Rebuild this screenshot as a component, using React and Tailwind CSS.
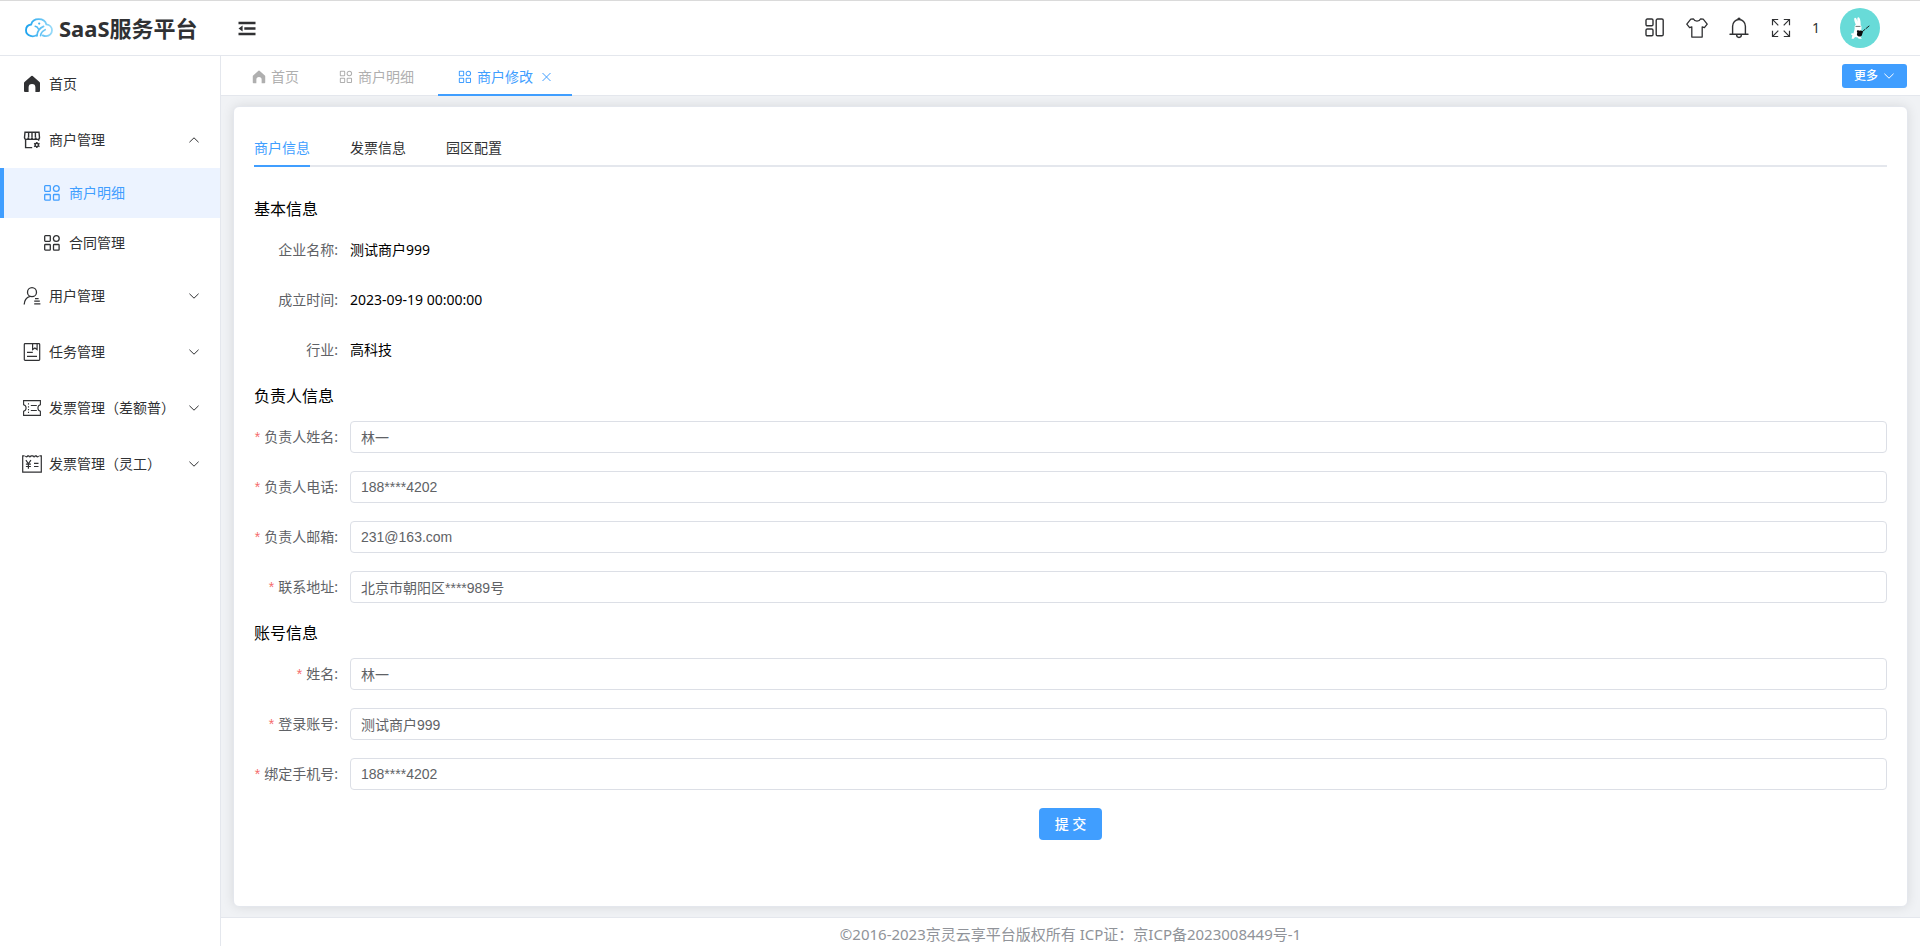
import { useState } from "react";
import clsx from "clsx";

const LogoIcon = () => (
  <svg width="28" height="20" viewBox="0 0 28 20" fill="none" strokeLinecap="round">
    <defs>
      <linearGradient id="cloud" x1="0" y1="0" x2="28" y2="0" gradientUnits="userSpaceOnUse">
        <stop offset="0" stopColor="#16a0ee" />
        <stop offset="1" stopColor="#9bdcf9" />
      </linearGradient>
    </defs>
    <g stroke="url(#cloud)">
      <path
        strokeWidth="1.8"
        d="M11.5 17.3c-1.8 1-4 1.300-6 .6C2.600 17 1 14.700 1 12.200c0-3 2.200-5.300 5.200-5.700C7 3.300 10.200 1.200 13.800 1.200c3.700 0 6.700 2 7.600 5.200 3.300.3 5.600 2.800 5.600 5.900 0 3.300-2.500 5.900-5.900 5.900-1.300 0-2.400-.3-3.400-.8"
      />
      <path strokeWidth="1.700" d="M12 17.900c.1-4.200 2.200-7.700 6.600-9.500M15.600 17.600c.3-2.400 1.900-4.700 4.600-5.900" />
      <path strokeWidth="1.500" d="M10.200 8.300c1.600.3 2.700 1.300 3.200 2.800" />
    </g>
    <circle cx="14.200" cy="5.600" r="1.100" fill="#3fb4f2" />
  </svg>
);

const FoldIcon = () => (
  <svg width="18" height="15" viewBox="0 0 18 15" fill="#303133">
    <path d="M.500 .8h17v2.400H.500zM6.300 6.300h11.200v2.400H6.300zM.500 11.800h17v2.400H.500zM.500 7.500 4.600 4.500v6z" />
  </svg>
);

const HomeIcon = ({ size = 18 }) => (
  <svg width={size} height={size} viewBox="0 0 18 18" fill="currentColor">
    <path d="M9 .8a1 1 0 0 1 .7.3l6.800 6c.3.300.5.600.5 1V16a1 1 0 0 1-1 1h-3.600v-4.600a3.400 3.400 0 0 0-6.800 0V17H2a1 1 0 0 1-1-1V8.100c0-.4.2-.7.5-1l6.800-6A1 1 0 0 1 9 .8z" />
  </svg>
);

const GridIcon = ({ size = 18 }) => (
  <svg width={size} height={size} viewBox="0 0 18 18" fill="none" stroke="currentColor" strokeWidth="1.300">
    <rect x="1.700" y="1.700" width="5.600" height="5.600" rx=".7" />
    <circle cx="13.300" cy="4.500" r="2.900" />
    <rect x="1.700" y="10.500" width="5.600" height="5.600" rx=".7" />
    <rect x="10.500" y="10.500" width="5.600" height="5.600" rx=".7" />
  </svg>
);

const ShopIcon = () => (
  <svg width="18" height="18" viewBox="0 0 18 18" fill="none" stroke="currentColor" strokeWidth="1.400">
    <path d="M2 1.200h14l.5 5.300c0 1.200-.8 1.900-1.900 1.900s-1.900-.7-1.900-1.900c0 1.200-.8 1.900-1.800 1.900S9 7.700 9 6.500c0 1.200-.8 1.900-1.900 1.900s-1.800-.7-1.800-1.900c0 1.200-.8 1.900-1.900 1.900s-1.900-.7-1.900-1.900z" />
    <path d="M5.600 1.200v5.300M9 1.200v5.300M12.400 1.200v5.300M2.600 8.200v8.400h6.600M15.600 8.200v1.600" />
    <circle cx="13.800" cy="14" r="1.700" strokeWidth="1.500" />
    <path d="M13.800 10.900v1M13.800 16.100v1M11.100 12.400l.9.600M15.600 15l.9.600M11.100 15.600l.9-.6M15.600 13l.9-.6" />
  </svg>
);

const UserIcon = () => (
  <svg width="18" height="18" viewBox="0 0 18 18" fill="none" stroke="currentColor" strokeWidth="1.300">
    <circle cx="9" cy="5.200" r="4.500" />
    <path d="M1.200 17.600c.1-4.200 2.200-7.200 5.800-8.300M12 11.600h3.600M11.200 14.200h5.600M11.200 16.900h6.200" />
  </svg>
);

const TaskIcon = () => (
  <svg width="18" height="18" viewBox="0 0 18 18" fill="none" stroke="currentColor" strokeWidth="1.200">
    <rect x="1.300" y=".7" width="15.400" height="16.600" rx=".8" />
    <path d="M9.600.7v5.900l2.300-1.600 2.200 1.600V.7M4 9.400h5.800M4 13.300h10" />
  </svg>
);

const TicketIcon = () => (
  <svg width="18" height="18" viewBox="0 0 18 18" fill="none" stroke="currentColor" strokeWidth="1.100">
    <path d="M.6 1.600h16.800v4.200c-1.500.4-2.500 1.600-2.500 3.200s1 2.800 2.500 3.200v4.200H.6v-4.200C2.100 11.800 3.100 10.600 3.100 9S2.100 6.200.6 5.800z" />
    <path d="M5.500 4.200v1.300M5.500 7.200v1.300M5.500 10v1.300M5.500 12.800v1.300M7.800 6.500h6M7.800 11.500h6" />
  </svg>
);

const InvoiceIcon = () => (
  <svg width="20" height="18" viewBox="0 0 20 18" fill="none" stroke="currentColor" strokeWidth="1.200">
    <path d="M2.600.8H.7v16.400h18.600V.8h-1.900M3.500.8c.2 1.300 2 1.300 2.200 0h1.100c.2 1.300 2 1.300 2.200 0h2c.2 1.300 2 1.300 2.200 0h1.100c.2 1.300 2 1.300 2.200 0" />
    <path d="m3.900 5.200 2.500 3.600L8.900 5.200M6.400 8.800v5M3.900 9.200h5M3.900 11.500h5M12 8.300h4.500M12 11.500h4.500" />
  </svg>
);

const Chevron = ({ up }) => (
  <svg
    className={clsx(up && "rotate-180")}
    width="12"
    height="12"
    viewBox="0 0 12 12"
    fill="none"
    stroke="currentColor"
    strokeLinecap="round"
    strokeLinejoin="round"
  >
    <path d="m1.700 4 4.300 4.200L10.300 4" />
  </svg>
);

const LayoutIcon = () => (
  <svg width="20" height="20" viewBox="0 0 20 20" fill="none" stroke="currentColor" strokeWidth="1.400">
    <rect x="1" y="1" width="7" height="6.800" rx="1.300" />
    <rect x="1" y="11" width="7" height="6.800" rx="1.300" />
    <rect x="11.200" y="1" width="7" height="16.800" rx="1.300" />
  </svg>
);

const ShirtIcon = () => (
  <svg width="22" height="20" viewBox="0 0 22 20" fill="none" stroke="currentColor" strokeWidth="1.300" strokeLinejoin="round">
    <path d="M7.300.8 4.800 1.200.8 6.200l2.800 3.500 2.200-.9v10.300h10.400V8.800l2.200.9 2.800-3.500-4-5-2.500-.4C14 2.300 12.700 3.200 11 3.200S8 2.300 7.300.8z" />
  </svg>
);

const BellIcon = () => (
  <svg width="20" height="22" viewBox="0 0 20 22" fill="none" stroke="currentColor" strokeWidth="1.400" strokeLinecap="round">
    <path d="M3.600 17.300V9.200C3.600 5.400 6.400 2.500 10 2.500s6.400 2.900 6.400 6.700v8.100M1 17.300h18M9 2.300c0-1.500 2-1.500 2 0M7.600 17.800c.1 3.500 4.700 3.500 4.800 0" />
  </svg>
);

const FullScreenIcon = () => (
  <svg width="20" height="20" viewBox="0 0 20 20" fill="none" stroke="currentColor" strokeWidth="1.200">
    <path d="M1.500 7.200V1.500h5.700M1.700 1.700l5.600 5.600M12.800 1.500h5.700v5.700M18.300 1.700l-5.600 5.600M1.500 12.800v5.700h5.700M1.700 18.300l5.600-5.600M12.800 18.500h5.700v-5.700M18.300 18.300l-5.600-5.600" />
  </svg>
);

const Avatar = () => (
  <svg className="rounded-full" width="40" height="40" viewBox="0 0 40 40">
    <rect width="40" height="40" fill="#68dbd8" />
    <g fill="#fff">
      <path d="M16.200 17.500c-1-2.500-2.200-4.800-2-6.800.2-1.300 1.500-1.200 2.100-.2 1 1.800 1.700 4 2 6zM18.200 17c-.2-2.500-1.300-5-.8-7 .4-1.200 1.700-.9 2.200.2.900 2 1.200 4.500 1 6.800z" />
      <path d="M14.600 18.500c.5-1.900 2-2.600 3.600-2.500 2 .1 3.400 1.400 3.300 3.300l-.3 4.700c.3 2.300.2 4.300-.5 5.200l1.200 1.500h-3.200l-1-1.200-2.600-.5-1.500 1.800h-2l.8-3.500c-1.200-.3-1.600-1.100-1-1.700.7-.6 1.400-.2 2-.2.6-2.200 1.500-3.600 1.200-6.900z" />
    </g>
    <path d="M15.500 18.400h5" stroke="#333" strokeWidth=".7" />
    <path d="M21.500 24.300 29.300 17.800" stroke="#111" strokeWidth=".9" strokeDasharray="5 .8" />
    <path d="M17 22.700c1.300-.9 2.100.2 3.100-.1 1.200-.6 2.500.2 2.700 1.500.2 1.100-.6 1.400-.7 2.300-.2 1.700-1.700 2.500-3.200 2-1.700-.5-2.500-1.900-1.700-3.500.4-.9-.7-1.200-.2-2.200z" fill="#0b0b0b" />
  </svg>
);

const menuClass = "flex h-14 w-full items-center pl-[22px] pr-5 text-left text-sm text-[#303133]";
const subMenuClass = "flex h-[50px] items-center gap-2 border-l-4 pl-[39px] text-sm";

const groups = [
  { label: "用户管理", icon: <UserIcon /> },
  { label: "任务管理", icon: <TaskIcon /> },
  { label: "发票管理（差额普）", icon: <TicketIcon /> },
  { label: "发票管理（灵工）", icon: <InvoiceIcon /> },
];

function MenuGroup({ label, icon, open, onClick }) {
  return (
    <button type="button" className={menuClass} onClick={onClick} aria-expanded={!!open}>
      <span className="mr-[7px] flex w-5 justify-center">{icon}</span>
      {label}
      <span className="ml-auto">
        <Chevron up={open} />
      </span>
    </button>
  );
}

function Sidebar() {
  const [open, setOpen] = useState(true);

  return (
    <aside className="w-[221px] shrink-0 border-r border-[#e4e7ed] bg-white">
      <nav>
        <a href="#home" className={menuClass}>
          <span className="mr-[7px] flex w-5 justify-center">
            <HomeIcon />
          </span>
          首页
        </a>
        <MenuGroup label="商户管理" icon={<ShopIcon />} open={open} onClick={() => setOpen(!open)} />
        {open && (
          <>
            <a href="#merchant" className={clsx(subMenuClass, "border-[#409eff] bg-[#ecf3ff] text-[#409eff]")}>
              <GridIcon />
              商户明细
            </a>
            <a href="#contract" className={clsx(subMenuClass, "border-transparent text-[#303133]")}>
              <GridIcon />
              合同管理
            </a>
          </>
        )}
        {groups.map((g) => (
          <MenuGroup key={g.label} {...g} />
        ))}
      </nav>
    </aside>
  );
}

function Header() {
  return (
    <header className="flex h-14 shrink-0 items-center border-t border-b border-t-[#dadada] border-b-[#e4e7ed] bg-white pl-[25px] pr-10 text-[#303133]">
      <div className="flex items-center gap-1.5">
        <LogoIcon />
        <h1 className="text-[22px] font-bold leading-none">SaaS服务平台</h1>
      </div>
      <button type="button" className="ml-10" aria-label="折叠菜单">
        <FoldIcon />
      </button>
      <div className="ml-auto flex items-center gap-5">
        <div className="mr-px flex items-center gap-[22px]">
          <button type="button" className="flex w-5 justify-center" aria-label="布局">
            <LayoutIcon />
          </button>
          <button type="button" className="flex w-5 justify-center" aria-label="主题">
            <span className="-mx-px">
              <ShirtIcon />
            </span>
          </button>
          <button type="button" className="flex w-5 justify-center" aria-label="消息">
            <BellIcon />
          </button>
          <button type="button" className="flex w-5 justify-center" aria-label="全屏">
            <FullScreenIcon />
          </button>
        </div>
        <span className="text-sm">1</span>
        <button type="button" aria-label="个人中心">
          <Avatar />
        </button>
      </div>
    </header>
  );
}

function TabsBar() {
  return (
    <div className="flex h-10 shrink-0 items-center border-b border-[#e4e7ed] bg-white pl-[11px] pr-[13px] text-sm text-[#afafaf]">
      <a href="#home" className="flex items-center gap-[5px] px-5 pt-0.5">
        <HomeIcon size={14} />
        首页
      </a>
      <a href="#merchant" className="flex items-center gap-[5px] pl-5 pr-6 pt-0.5">
        <GridIcon size={14} />
        商户明细
      </a>
      <div className="-mb-px flex h-10 items-center border-b-2 border-[#409eff] px-5 pt-[3px] text-[#409eff]">
        <a href="#edit" className="flex items-center gap-[5px]">
          <GridIcon size={14} />
          商户修改
        </a>
        <button type="button" className="ml-2" aria-label="关闭">
          <svg width="11" height="12" viewBox="0 0 11 12" fill="none" stroke="currentColor">
            <path d="m1.500 2 8 8M9.500 2l-8 8" />
          </svg>
        </button>
      </div>
      <button
        type="button"
        className="ml-auto flex h-6 items-center gap-[5px] rounded-[3px] bg-[#409eff] px-3 text-xs font-medium text-white"
      >
        更多
        <Chevron />
      </button>
    </div>
  );
}

const Title = ({ children }) => <h2 className="mb-[13px] text-base text-black">{children}</h2>;

const labelClass = "w-24 shrink-0 whitespace-nowrap pr-3 text-right text-sm leading-8 text-[#606266]";

const TextRow = ({ label, value }) => (
  <div className="mb-[18px] flex">
    <span className={labelClass}>{label}:</span>
    <span className="text-sm leading-8 text-black">{value}</span>
  </div>
);

const InputRow = ({ label, name, value, onChange }) => (
  <div className="mb-[18px] flex h-8">
    <label htmlFor={name} className={labelClass}>
      <span className="mr-1 font-['Liberation_Sans',sans-serif] text-[#f56c6c]">*</span>
      {label}:
    </label>
    <input
      id={name}
      name={name}
      value={value}
      onChange={onChange}
      className="h-8 min-w-0 flex-1 rounded border border-[#dcdfe6] px-[10px] font-['Liberation_Sans','Noto_Sans_CJK_SC',sans-serif] text-sm text-[#606266] outline-none focus:border-[#409eff]"
    />
  </div>
);

const tabs = ["商户信息", "发票信息", "园区配置"];

function MerchantForm() {
  const [active, setActive] = useState(0);
  const [form, setForm] = useState({
    leaderName: "林一",
    leaderPhone: "188****4202",
    leaderEmail: "231@163.com",
    address: "北京市朝阳区****989号",
    name: "林一",
    account: "测试商户999",
    phone: "188****4202",
  });

  const handleChange = (e) => {
    setForm({ ...form, [e.target.name]: e.target.value });
  };

  const row = (label, name) => (
    <InputRow label={label} name={name} value={form[name]} onChange={handleChange} />
  );

  return (
    <section className="flex-1 rounded-md border border-[#e4e7ed] bg-white p-5 shadow-[0_0_12px_rgba(0,0,0,0.1)]">
      <div className="mb-[30px] flex h-10 gap-10 border-b-2 border-[#e4e7ed]">
        {tabs.map((tab, i) => (
          <button
            key={tab}
            type="button"
            onClick={() => setActive(i)}
            className={clsx(
              "-mb-0.5 border-b-2 pt-1 text-sm",
              active === i ? "border-[#409eff] text-[#409eff]" : "border-transparent text-[#303133]"
            )}
          >
            {tab}
          </button>
        ))}
      </div>

      <form onSubmit={(e) => e.preventDefault()}>
        <Title>基本信息</Title>
        <TextRow label="企业名称" value="测试商户999" />
        <TextRow label="成立时间" value="2023-09-19 00:00:00" />
        <TextRow label="行业" value="高科技" />

        <Title>负责人信息</Title>
        {row("负责人姓名", "leaderName")}
        {row("负责人电话", "leaderPhone")}
        {row("负责人邮箱", "leaderEmail")}
        {row("联系地址", "address")}

        <Title>账号信息</Title>
        {row("姓名", "name")}
        {row("登录账号", "account")}
        {row("绑定手机号", "phone")}

        <div className="flex justify-center">
          <button type="submit" className="h-8 rounded bg-[#409eff] px-4 text-sm font-medium text-white">
            提 交
          </button>
        </div>
      </form>
    </section>
  );
}

export default function App() {
  return (
    <div className="flex min-h-screen flex-col bg-white font-['Noto_Sans','Noto_Sans_CJK_SC',sans-serif]">
      <Header />
      <div className="flex flex-1">
        <Sidebar />
        <div className="flex min-w-0 flex-1 flex-col">
          <TabsBar />
          <main className="flex flex-1 flex-col bg-[#f0f2f5] px-3 py-[10px]">
            <MerchantForm />
          </main>
          <footer className="border-t border-[#e4e7ed] pt-1 text-center text-[15px] leading-6 text-[#909399]">
            ©2016-2023京灵云享平台版权所有 ICP证：京ICP备2023008449号-1
          </footer>
        </div>
      </div>
    </div>
  );
}
